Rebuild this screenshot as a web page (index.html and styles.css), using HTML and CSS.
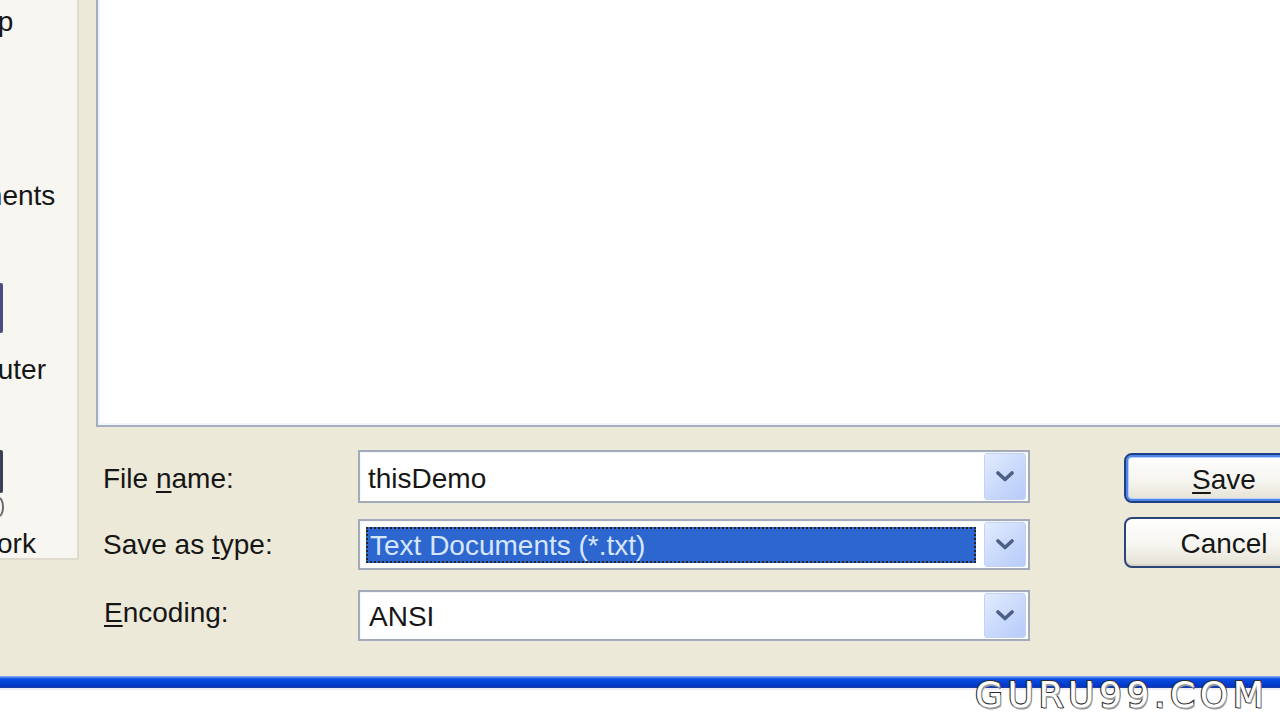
FILE: index.html
```html
<!DOCTYPE html>
<html>
<head>
<meta charset="utf-8">
<title>Save As</title>
<link rel="stylesheet" href="styles.css">
</head>
<body>
<div class="dialog">
  <div class="main">
    <div class="places">
      <div class="places-inner">
        <div class="place"><div class="place-icon"></div><div class="place-label">Desktop</div></div>
        <div class="place"><div class="place-icon"></div><div class="place-label">My Documents</div></div>
        <div class="place">
          <div class="place-icon">
            <svg width="232" height="142" viewBox="0 0 232 142"><rect x="146" y="71" width="11" height="50" rx="2" fill="#4a4c84"/><rect x="146" y="78" width="4" height="36" fill="#6a6ca8"/></svg>
          </div>
          <div class="place-label">My Computer</div>
        </div>
        <div class="place">
          <div class="place-icon">
            <svg width="232" height="142" viewBox="0 0 232 142"><rect x="148" y="64" width="9" height="43" rx="2" fill="#3b3f58"/><ellipse cx="153" cy="121" rx="4" ry="9" fill="none" stroke="#6b6b70" stroke-width="2"/></svg>
          </div>
          <div class="place-label">My Network</div>
        </div>
      </div>
    </div>
    <div class="content">
      <div class="file-list"></div>
      <div class="form">
        <div class="fields">
          <div class="row row-first">
            <div class="label label-first">File <u>n</u>ame:</div>
            <div class="combo">
              <div class="combo-text combo-first">thisDemo</div>
              <div class="drop"><svg width="18" height="11" viewBox="0 0 18 11"><polyline points="2,2 9,8.5 16,2" fill="none" stroke="#4c5f86" stroke-width="3.6" stroke-linecap="round" stroke-linejoin="round"/></svg></div>
            </div>
          </div>
          <div class="row row-second">
            <div class="label">Save as <u>t</u>ype:</div>
            <div class="combo">
              <div class="combo-select"><span>Text Documents (*.txt)</span></div>
              <div class="drop"><svg width="18" height="11" viewBox="0 0 18 11"><polyline points="2,2 9,8.5 16,2" fill="none" stroke="#4c5f86" stroke-width="3.6" stroke-linecap="round" stroke-linejoin="round"/></svg></div>
            </div>
          </div>
          <div class="row row-third">
            <div class="label label-enc"><u>E</u>ncoding:</div>
            <div class="combo">
              <div class="combo-text combo-enc">ANSI</div>
              <div class="drop"><svg width="18" height="11" viewBox="0 0 18 11"><polyline points="2,2 9,8.5 16,2" fill="none" stroke="#4c5f86" stroke-width="3.6" stroke-linecap="round" stroke-linejoin="round"/></svg></div>
            </div>
          </div>
        </div>
        <div class="buttons">
          <div class="btn btn-default"><u>S</u>ave</div>
          <div class="btn btn-cancel">Cancel</div>
        </div>
      </div>
    </div>
  </div>
  <div class="titlebar"></div>
  <div class="below"></div>
  <div class="watermark">GURU99.COM</div>
</div>
</body>
</html>
```

FILE: styles.css
```css
html, body {
  margin: 0;
  padding: 0;
  width: 1280px;
  height: 720px;
  overflow: hidden;
  background: #ffffff;
}

.dialog {
  position: relative;
  width: 1280px;
  height: 720px;
  display: flex;
  flex-direction: column;
  font-family: "Liberation Sans", Arial, sans-serif;
  font-size: 28px;
  color: #161616;
}

.main {
  height: 676px;
  flex-shrink: 0;
  display: flex;
  background: #ece9d8;
  overflow: hidden;
}

/* places bar */
.places {
  width: 77px;
  height: 558px;
  flex-shrink: 0;
  background: #f7f6f1;
  border-right: 2px solid #dedacd;
  border-bottom: 2px solid #dedacd;
  overflow: hidden;
}

.places-inner {
  width: 232px;
  margin-left: -154px;
  margin-top: -136px;
  display: flex;
  flex-direction: column;
}

.place {
  height: 174px;
  display: flex;
  flex-direction: column;
  align-items: center;
}

.place-icon {
  width: 232px;
  height: 142px;
}

.place-label {
  height: 32px;
  line-height: 32px;
  white-space: nowrap;
  text-align: center;
}

/* right content */
.content {
  flex: 1;
  min-width: 0;
  padding-left: 17px;
  display: flex;
  flex-direction: column;
}

.file-list {
  height: 427px;
  width: 1220px;
  flex-shrink: 0;
  box-sizing: border-box;
  background: #ffffff;
  border-left: 2px solid #a4aec0;
  border-bottom: 2px solid #a4aec0;
  box-shadow: inset 2px 0 0 #eef3fd, inset 0 -2px 0 #f3f6fd;
}

.form {
  display: flex;
  margin-top: 23px;
  padding-left: 7px;
}

.fields {
  display: flex;
  flex-direction: column;
}

.row {
  display: flex;
  align-items: center;
  height: 51px;
}

.row-first {
  height: 53px;
}

.row-second {
  margin-top: 16px;
}

.row-third {
  margin-top: 20px;
}

.label {
  width: 255px;
  flex-shrink: 0;
  white-space: nowrap;
}

.label-first {
  padding-top: 5px;
}

.label-enc {
  padding-left: 1px;
  width: 254px;
  margin-top: -6px;
}

.label u, .btn u {
  text-decoration-thickness: 2px;
  text-underline-offset: 3px;
}

.combo {
  width: 672px;
  height: 100%;
  box-sizing: border-box;
  border: 2px solid #a3abba;
  background: #ffffff;
  display: flex;
  align-items: stretch;
  box-shadow: inset 1px 1px 0 #f4f6fb;
}

.combo-text {
  flex: 1;
  display: flex;
  align-items: center;
  padding-left: 8px;
  white-space: nowrap;
}

.combo-first {
  padding-top: 5px;
}

.combo-enc {
  padding-left: 9px;
  padding-top: 3px;
}

.combo-select {
  flex: 1;
  display: flex;
  margin: 6px 8px 5px 6px;
}

.combo-select span {
  flex: 1;
  display: flex;
  align-items: center;
  background: #2e66cf;
  color: #d6e6ff;
  outline: 2px dotted #262626;
  outline-offset: -2px;
  padding-left: 4px;
  padding-top: 2px;
  white-space: nowrap;
}

.drop {
  width: 42px;
  flex-shrink: 0;
  margin: 1px 2px 1px 0;
  box-sizing: border-box;
  border: 1px solid #c3d3f5;
  border-radius: 3px;
  background: linear-gradient(135deg, #e3ecfe 0%, #c9d9fc 55%, #b6cbf8 100%);
  display: flex;
  align-items: center;
  justify-content: center;
}

.buttons {
  display: flex;
  flex-direction: column;
  margin-left: 94px;
}

.btn {
  width: 200px;
  box-sizing: border-box;
  border-radius: 8px;
  display: flex;
  align-items: center;
  justify-content: center;
  background: linear-gradient(#ffffff 0%, #f6f5f0 55%, #e4e1d4 100%);
  white-space: nowrap;
}

.btn-default {
  height: 50px;
  margin-top: 3px;
  padding-top: 3px;
  border: 2px solid #1c3f86;
  box-shadow: inset 0 0 0 2px #4f86e8, inset 0 0 0 3px #b8d0fb;
}

.btn-cancel {
  height: 51px;
  margin-top: 14px;
  padding-top: 2px;
  border: 2px solid #2a4677;
  box-shadow: inset 0 -2px 0 #d8d4c6;
}

/* bottom */
.titlebar {
  height: 12px;
  flex-shrink: 0;
  background: linear-gradient(#9cc0f6 0px, #5a8ff0 1px, #0c4fe2 3px, #0543d8 6px, #0036c6 10px, #23409a 12px);
}

.below {
  flex: 1;
  background: #ffffff;
  box-shadow: inset 0 2px 0 #eeeef4;
}

.watermark {
  position: absolute;
  left: 975px;
  top: 677px;
  font-family: "DejaVu Sans", sans-serif;
  font-size: 36px;
  line-height: 36px;
  letter-spacing: 4.6px;
  color: #ffffff;
  -webkit-text-stroke: 2.2px #2c2c2c;
  paint-order: stroke fill;
  text-shadow: 1px 2px 0 #9a9a9a;
  white-space: nowrap;
}
```
